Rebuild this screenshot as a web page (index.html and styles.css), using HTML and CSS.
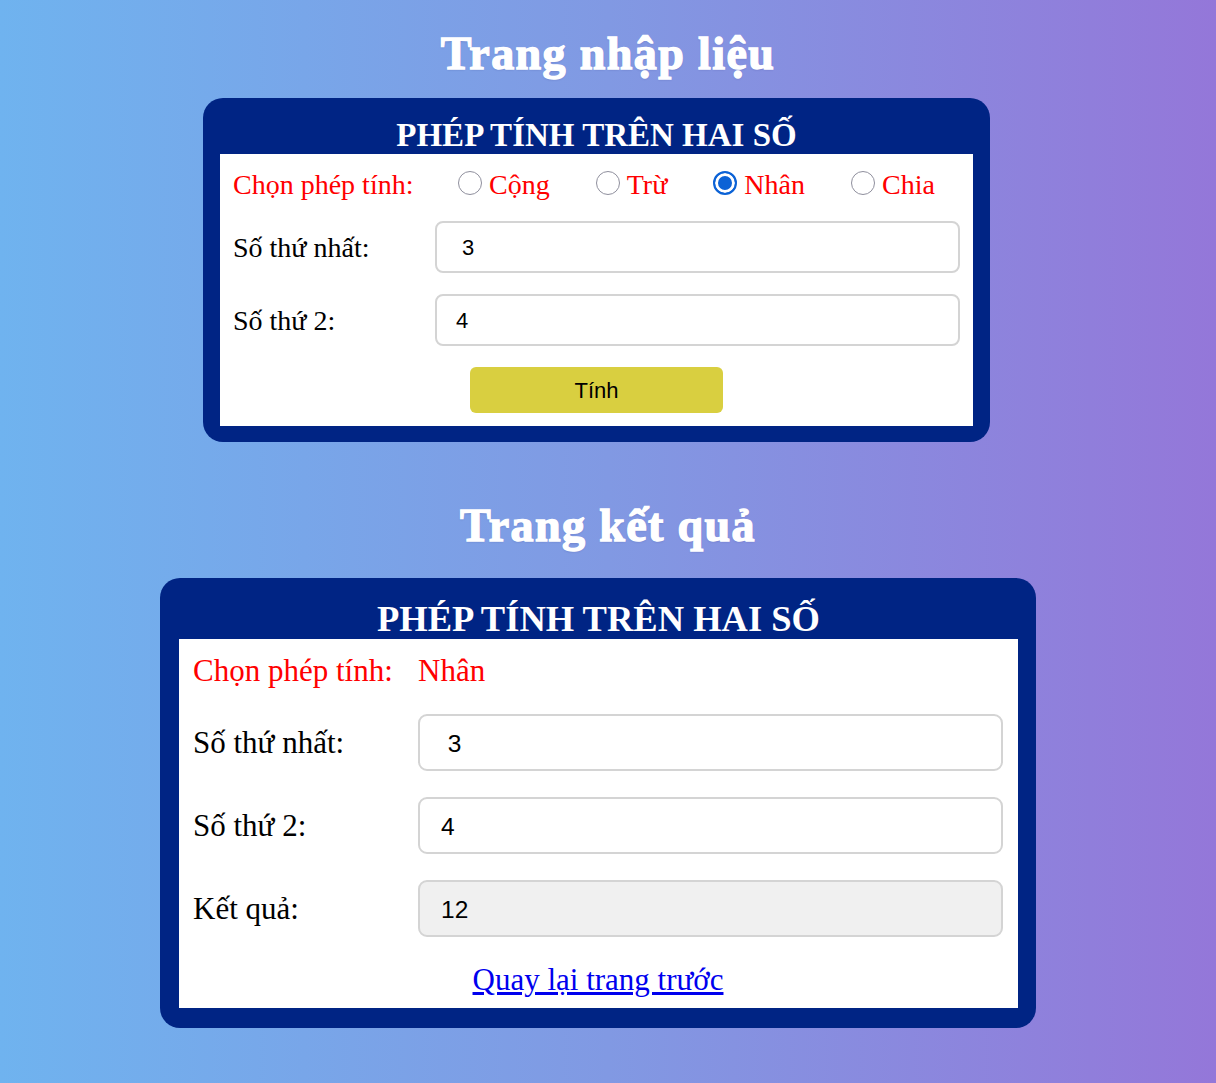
FILE: index.html
```html
<!DOCTYPE html>
<html lang="vi">
<head>
<meta charset="utf-8">
<title>Phép tính trên hai số</title>
<link rel="stylesheet" href="styles.css">
</head>
<body>
<main class="page">
  <h1 class="page-title title-input">Trang nhập liệu</h1>
  <section class="card card-input">
    <h2 class="card-title">PHÉP TÍNH TRÊN HAI SỐ</h2>
    <form class="panel panel-input">
      <div class="op-row">
        <span class="op-label">Chọn phép tính:</span>
        <label class="op"><input class="radio" type="radio" name="op"><span>Cộng</span></label>
        <label class="op"><input class="radio" type="radio" name="op"><span>Trừ</span></label>
        <label class="op"><input class="radio" type="radio" name="op" checked><span>Nhân</span></label>
        <label class="op"><input class="radio" type="radio" name="op"><span>Chia</span></label>
      </div>
      <div class="field">
        <label class="field-label">Số thứ nhất:</label>
        <input class="field-input" type="text" value=" 3">
      </div>
      <div class="field">
        <label class="field-label">Số thứ 2:</label>
        <input class="field-input" type="text" value="4">
      </div>
      <div class="actions">
        <button class="btn" type="button">Tính</button>
      </div>
    </form>
  </section>

  <h1 class="page-title title-result">Trang kết quả</h1>
  <section class="card card-result">
    <h2 class="card-title">PHÉP TÍNH TRÊN HAI SỐ</h2>
    <div class="panel panel-result">
      <span class="op-label">Chọn phép tính:</span>
      <span class="op-value">Nhân</span>
      <label class="field-label">Số thứ nhất:</label>
      <input class="field-input" type="text" value=" 3">
      <label class="field-label">Số thứ 2:</label>
      <input class="field-input" type="text" value="4">
      <label class="field-label">Kết quả:</label>
      <input class="field-input field-readonly" type="text" value="12" readonly>
      <div class="back-row"><a class="back-link" href="#">Quay lại trang trước</a></div>
    </div>
  </section>
</main>
</body>
</html>
```

FILE: styles.css
```css
html, body {
  margin: 0;
  padding: 0;
}

body {
  min-height: 1083px;
  background: linear-gradient(90deg, #6fb3ef 0%, #8199e3 50%, #9477d9 100%);
  font-family: "Liberation Serif", "Times New Roman", serif;
  overflow: hidden;
}

.page {
  display: flex;
  flex-direction: column;
  align-items: center;
  padding-top: 28px;
}

.page-title {
  margin: 0;
  font-family: "Liberation Serif", "DejaVu Serif", serif;
  font-size: 46px;
  line-height: 52px;
  font-weight: 700;
  letter-spacing: 1.4px;
  color: #ffffff;
  -webkit-text-stroke: 1.4px #ffffff;
  text-shadow: 0 1px 2px rgba(40, 40, 120, 0.25);
}

.title-input {
  margin-bottom: 18px;
}

.title-result {
  margin-top: 58px;
  margin-bottom: 26px;
}

.card {
  box-sizing: border-box;
  background: #002484;
  border-radius: 20px;
}

.card-input {
  width: 787px;
  padding: 18px 17px 16px;
  margin-right: 23px;
}

.card-result {
  width: 876px;
  padding: 21px 18px 20px 19px;
  margin-right: 20px;
}

.card-title {
  margin: 0;
  text-align: center;
  color: #ffffff;
  font-weight: 700;
  font-family: "Liberation Serif", "Times New Roman", serif;
}

.card-input .card-title {
  font-size: 33px;
  line-height: 38px;
}

.card-result .card-title {
  font-size: 36.5px;
  line-height: 40px;
}

.panel {
  background: #ffffff;
  box-sizing: border-box;
}

/* input page */
.panel-input {
  display: flex;
  flex-direction: column;
  gap: 21px;
  padding: 15px 13px 13px;
  font-size: 28px;
}

.op-row {
  display: flex;
  align-items: center;
  height: 31px;
  line-height: 31px;
}

.op-label {
  color: #ff0000;
}

.panel-input .op-label {
  width: 225px;
  flex: none;
}

.op {
  display: flex;
  flex: none;
  align-items: center;
  gap: 7px;
  margin-right: 46px;
  color: #ff0000;
}

.op:last-child {
  margin-right: 0;
}

.radio {
  appearance: none;
  -webkit-appearance: none;
  box-sizing: border-box;
  width: 24px;
  height: 24px;
  margin: 0 0 4px 0;
  border: 1.5px solid #8f8f9d;
  border-radius: 50%;
  background: #ffffff;
}

.radio:checked {
  border: 2px solid #0b62d6;
  background: #0b62d6;
  box-shadow: inset 0 0 0 3px #ffffff;
}

.field {
  display: flex;
  align-items: center;
}

.field-label {
  color: #000000;
  line-height: 31px;
}

.panel-input .field-label {
  width: 202px;
  flex: none;
}

.field-input {
  box-sizing: border-box;
  flex: 1;
  min-width: 0;
  margin: 0;
  border: 2px solid #d4d4d4;
  background: #ffffff;
  color: #000000;
  font-family: "Liberation Sans", Arial, sans-serif;
  outline: none;
}

.panel-input .field-input {
  height: 52px;
  border-radius: 8px;
  padding: 2px 19px 0;
  font-size: 22px;
}

.actions {
  display: flex;
  justify-content: center;
}

.btn {
  width: 253px;
  height: 46px;
  border: none;
  border-radius: 6px;
  background: #d9cf40;
  color: #000000;
  font-family: "Liberation Sans", Arial, sans-serif;
  font-size: 22px;
  padding: 2px 0 0;
}

/* result page */
.panel-result {
  display: grid;
  grid-template-columns: 225px 1fr;
  row-gap: 26px;
  align-items: center;
  padding: 15px 15px 11px 14px;
  font-size: 31px;
  line-height: 34px;
}

.op-value {
  color: #ff0000;
}

.panel-result .field-input {
  width: 100%;
  height: 57px;
  border-radius: 9px;
  padding: 2px 21px 0;
  font-size: 24.5px;
}

.field-readonly {
  background: #f0f0f0;
}

.back-row {
  grid-column: 1 / -1;
  text-align: center;
}

.back-link {
  color: #0000ee;
  text-decoration: underline;
}
```
